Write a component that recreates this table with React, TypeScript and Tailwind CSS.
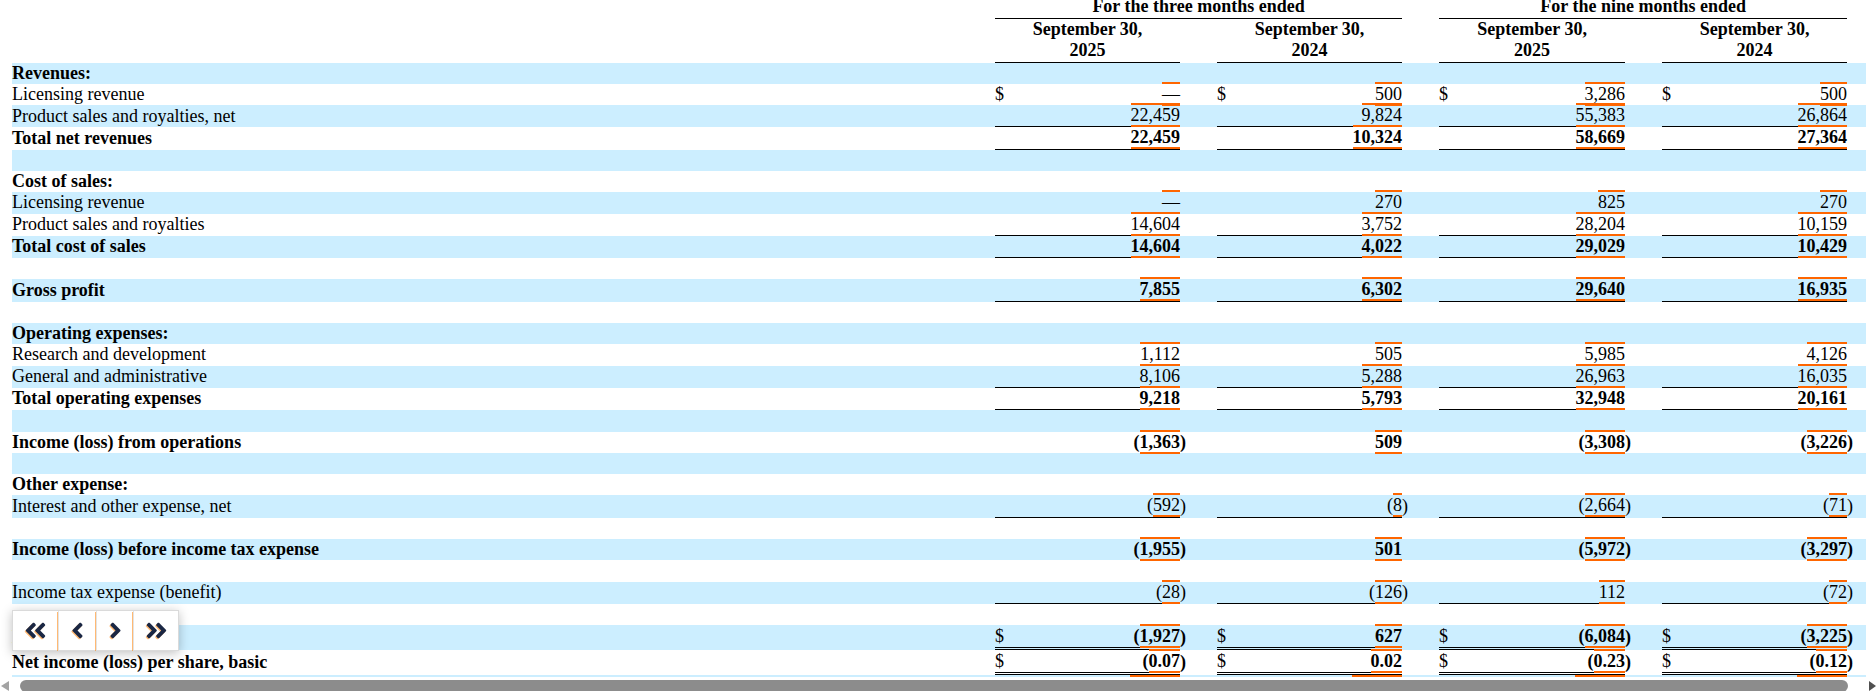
import { Fragment } from 'react'
import { FaAngleDoubleLeft, FaAngleLeft, FaAngleRight, FaAngleDoubleRight } from 'react-icons/fa'

type Row = {
  label: string
  bold?: boolean
  vals?: string[]
  dollar?: boolean
  line?: 'single' | 'double'
}

const rows: Row[] = [
  { label: 'Revenues:', bold: true },
  { label: 'Licensing revenue', vals: ['—', '500', '3,286', '500'], dollar: true },
  { label: 'Product sales and royalties, net', vals: ['22,459', '9,824', '55,383', '26,864'], line: 'single' },
  { label: 'Total net revenues', bold: true, vals: ['22,459', '10,324', '58,669', '27,364'], line: 'single' },
  { label: '' },
  { label: 'Cost of sales:', bold: true },
  { label: 'Licensing revenue', vals: ['—', '270', '825', '270'] },
  { label: 'Product sales and royalties', vals: ['14,604', '3,752', '28,204', '10,159'], line: 'single' },
  { label: 'Total cost of sales', bold: true, vals: ['14,604', '4,022', '29,029', '10,429'], line: 'single' },
  { label: '' },
  { label: 'Gross profit', bold: true, vals: ['7,855', '6,302', '29,640', '16,935'], line: 'single' },
  { label: '' },
  { label: 'Operating expenses:', bold: true },
  { label: 'Research and development', vals: ['1,112', '505', '5,985', '4,126'] },
  { label: 'General and administrative', vals: ['8,106', '5,288', '26,963', '16,035'], line: 'single' },
  { label: 'Total operating expenses', bold: true, vals: ['9,218', '5,793', '32,948', '20,161'], line: 'single' },
  { label: '' },
  { label: 'Income (loss) from operations', bold: true, vals: ['(1,363)', '509', '(3,308)', '(3,226)'] },
  { label: '' },
  { label: 'Other expense:', bold: true },
  { label: 'Interest and other expense, net', vals: ['(592)', '(8)', '(2,664)', '(71)'], line: 'single' },
  { label: '' },
  { label: 'Income (loss) before income tax expense', bold: true, vals: ['(1,955)', '501', '(5,972)', '(3,297)'] },
  { label: '' },
  { label: 'Income tax expense (benefit)', vals: ['(28)', '(126)', '112', '(72)'], line: 'single' },
  { label: '' },
  { label: 'Net income (loss)', bold: true, dollar: true, vals: ['(1,927)', '627', '(6,084)', '(3,225)'], line: 'double' },
  { label: 'Net income (loss) per share, basic', bold: true, dollar: true, vals: ['(0.07)', '0.02', '(0.23)', '(0.12)'], line: 'double' },
]

const groups = [0, 1, 2, 3]

function Amount({ value }: { value: string }) {
  const neg = value.startsWith('(')
  const core = neg ? value.slice(1, -1) : value
  return (
    <>
      {neg && '('}
      <span className="border-y-2 border-[#ff6600]">{core}</span>
    </>
  )
}

function DataRow({ row, index }: { row: Row; index: number }) {
  const bg = index % 2 === 0 ? 'bg-[#cceeff]' : 'bg-white'
  const line =
    row.line === 'single'
      ? 'border-b border-black'
      : row.line === 'double'
        ? 'border-b-[3px] border-double border-black'
        : ''
  const weight = row.bold ? 'font-bold' : 'font-normal'
  const height = row.line === 'double' ? 'h-[25px]' : 'h-[21.3px]'

  return (
    <tr className={`${height} ${bg}`}>
      <td className={`whitespace-nowrap ${weight}`}>{row.label}</td>
      {groups.map((g) => (
        <Fragment key={g}>
          <td className={line}>{row.dollar && row.vals ? '$' : ''}</td>
          <td className={`whitespace-nowrap text-right ${line} ${weight}`}>
            {row.vals && <Amount value={row.vals[g]} />}
          </td>
          <td className={weight}>{row.vals && row.vals[g].startsWith('(') ? ')' : ''}</td>
          {g < 3 && <td />}
        </Fragment>
      ))}
    </tr>
  )
}

function PagerButton({ children, width }: { children: React.ReactNode; width: string }) {
  return (
    <button
      type="button"
      className={`flex h-full items-center justify-center border-r border-[#e3e3e3] last:border-r-0 text-[#1a2744] drop-shadow-[-1px_1px_0_rgba(255,128,0,0.55)] ${width}`}
    >
      {children}
    </button>
  )
}

export default function App() {
  return (
    <div className="relative h-[691px] w-[1876px] overflow-hidden bg-white font-['Liberation_Serif','Times_New_Roman',serif] text-[18px] text-black">
      <div className="h-[677px] overflow-hidden">
        <table className="-mt-[4px] ml-[12px] w-[1854px] table-fixed border-separate border-spacing-0 leading-[21.3px]">
          <colgroup>
            <col className="w-[983px]" />
            {groups.map((g) => (
              <Fragment key={g}>
                <col className="w-[20px]" />
                <col className={g === 2 ? 'w-[166px]' : 'w-[165px]'} />
                <col className="w-[19px]" />
                {g < 3 && <col className="w-[18px]" />}
              </Fragment>
            ))}
          </colgroup>
          <thead className="leading-[21.5px]">
            <tr>
              <th />
              <th colSpan={6} className="border-b border-black text-center font-bold">
                For the three months ended
              </th>
              <th />
              <th />
              <th colSpan={6} className="border-b border-black text-center font-bold">
                For the nine months ended
              </th>
              <th />
            </tr>
            <tr>
              <th />
              {['2025', '2024', '2025', '2024'].map((year, g) => (
                <Fragment key={g}>
                  <th colSpan={2} className="border-b border-black text-center align-bottom font-bold">
                    September 30,
                    <br />
                    {year}
                  </th>
                  <th />
                  {g < 3 && <th />}
                </Fragment>
              ))}
            </tr>
          </thead>
          <tbody>
            {rows.map((row, i) => (
              <DataRow key={i} row={row} index={i} />
            ))}
            {/* next row, cut off by the scroll area: only its top edge shows */}
            <tr className="h-[21.3px] bg-[#cceeff]">
              <td />
              {groups.map((g) => (
                <Fragment key={g}>
                  <td />
                  <td className="align-top">
                    <div className="ml-auto w-[50px] border-t-2 border-[#ff6600]" />
                  </td>
                  <td />
                  {g < 3 && <td />}
                </Fragment>
              ))}
            </tr>
          </tbody>
        </table>
      </div>

      {/* horizontal scrollbar */}
      <div className="flex h-[14px] items-start bg-white pt-[3px]">
        <div className="w-[20px]">
          <svg width="10" height="12" viewBox="0 0 10 12">
            <polygon points="1,6 9,1 9,11" fill="#a3a3a3" />
          </svg>
        </div>
        <div className="h-[12px] w-[1828px] rounded-[6px] bg-[#8c8c8c]" />
        <div className="ml-[20px]">
          <svg width="8" height="12" viewBox="0 0 8 12">
            <polygon points="1,1 8,6 1,11" fill="#505050" />
          </svg>
        </div>
      </div>

      {/* floating pager */}
      <div className="absolute left-[12px] top-[610px] flex h-[41px] border border-[#dadada] bg-white shadow-[0_2px_10px_rgba(0,0,0,0.25)]">
        <PagerButton width="w-[46px]">
          <FaAngleDoubleLeft size={25} />
        </PagerButton>
        <PagerButton width="w-[38px]">
          <FaAngleLeft size={25} />
        </PagerButton>
        <PagerButton width="w-[37px]">
          <FaAngleRight size={25} />
        </PagerButton>
        <PagerButton width="w-[44px]">
          <FaAngleDoubleRight size={25} />
        </PagerButton>
      </div>
    </div>
  )
}
